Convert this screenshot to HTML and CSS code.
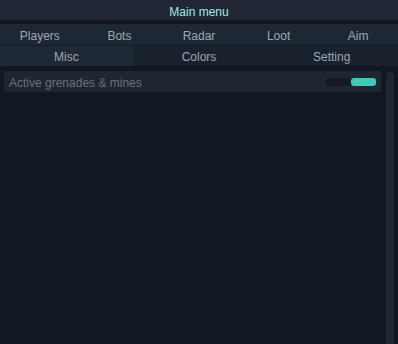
FILE: index.html
```html
<!DOCTYPE html>
<html lang="en">
<head>
    <meta charset="UTF-8">
    <meta name="viewport" content="width=device-width, initial-scale=1.0">
    <title>Main menu</title>
    <link rel="stylesheet" href="styles.css">
</head>
<body>
    <div class="title-bar">Main menu</div>

    <!-- Tabs -->
    <div class="tabs">
        <div class="tab-row five">
            <div class="tab">Players</div>
            <div class="tab">Bots</div>
            <div class="tab">Radar</div>
            <div class="tab">Loot</div>
            <div class="tab">Aim</div>
        </div>
        <div class="tab-row three">
            <div class="tab active">Misc</div>
            <div class="tab">Colors</div>
            <div class="tab">Setting</div>
        </div>
    </div>

    <!-- Content -->
    <div class="panel">
        <div class="list">
            <div class="option">
                <span>Active grenades &amp; mines</span>
                <div class="toggle on"><div class="knob"></div></div>
            </div>
        </div>
        <div class="scrollbar"></div>
    </div>
</body>
</html>
```

FILE: styles.css
```css
html, body {
    height: 100%;
}
body {
    margin: 0;
    background-color: #111822;
    font-family: "Liberation Sans", Arial, sans-serif;
    font-size: 12px;
    overflow: hidden;
    display: flex;
    flex-direction: column;
}
.title-bar {
    height: 20px;
    line-height: 24px;
    text-align: center;
    background: #1e2733;
    color: #a6e9e1;
    margin-bottom: 4px;
}
.tabs {
    display: flex;
    flex-direction: column;
    gap: 1px;
    background: #141b25;
}
.tab-row {
    display: grid;
    height: 21px;
}
.tab-row.five {
    grid-template-columns: repeat(5, 1fr);
    background: #1e2734;
}
.tab-row.three {
    height: 20px;
    grid-template-columns: repeat(3, 1fr);
    background: #19212c;
}
.tab {
    display: flex;
    align-items: center;
    justify-content: center;
    color: #9ea8b6;
    padding-top: 3px;
}
.tab-row.three .tab {
    padding-top: 2px;
}
.tab.active {
    background: #1f2835;
}
.panel {
    flex: 1;
    display: flex;
    gap: 5px;
    padding: 5px 4px 0 4px;
}
.list {
    flex: 1;
}
.option {
    height: 21px;
    display: flex;
    align-items: center;
    justify-content: space-between;
    background: #1d2631;
    color: #69737f;
    padding: 0 5px;
}
.option span {
    padding-top: 3px;
}
.toggle {
    width: 50px;
    height: 8px;
    border-radius: 4px;
    background: #131a23;
    display: flex;
    justify-content: flex-end;
}
.toggle .knob {
    width: 25px;
    height: 8px;
    border-radius: 3px;
    background: #41c9b7;
}
.scrollbar {
    width: 8px;
    margin-top: 1px;
    border-radius: 4px 4px 0 0;
    background: #1e2833;
}
```
